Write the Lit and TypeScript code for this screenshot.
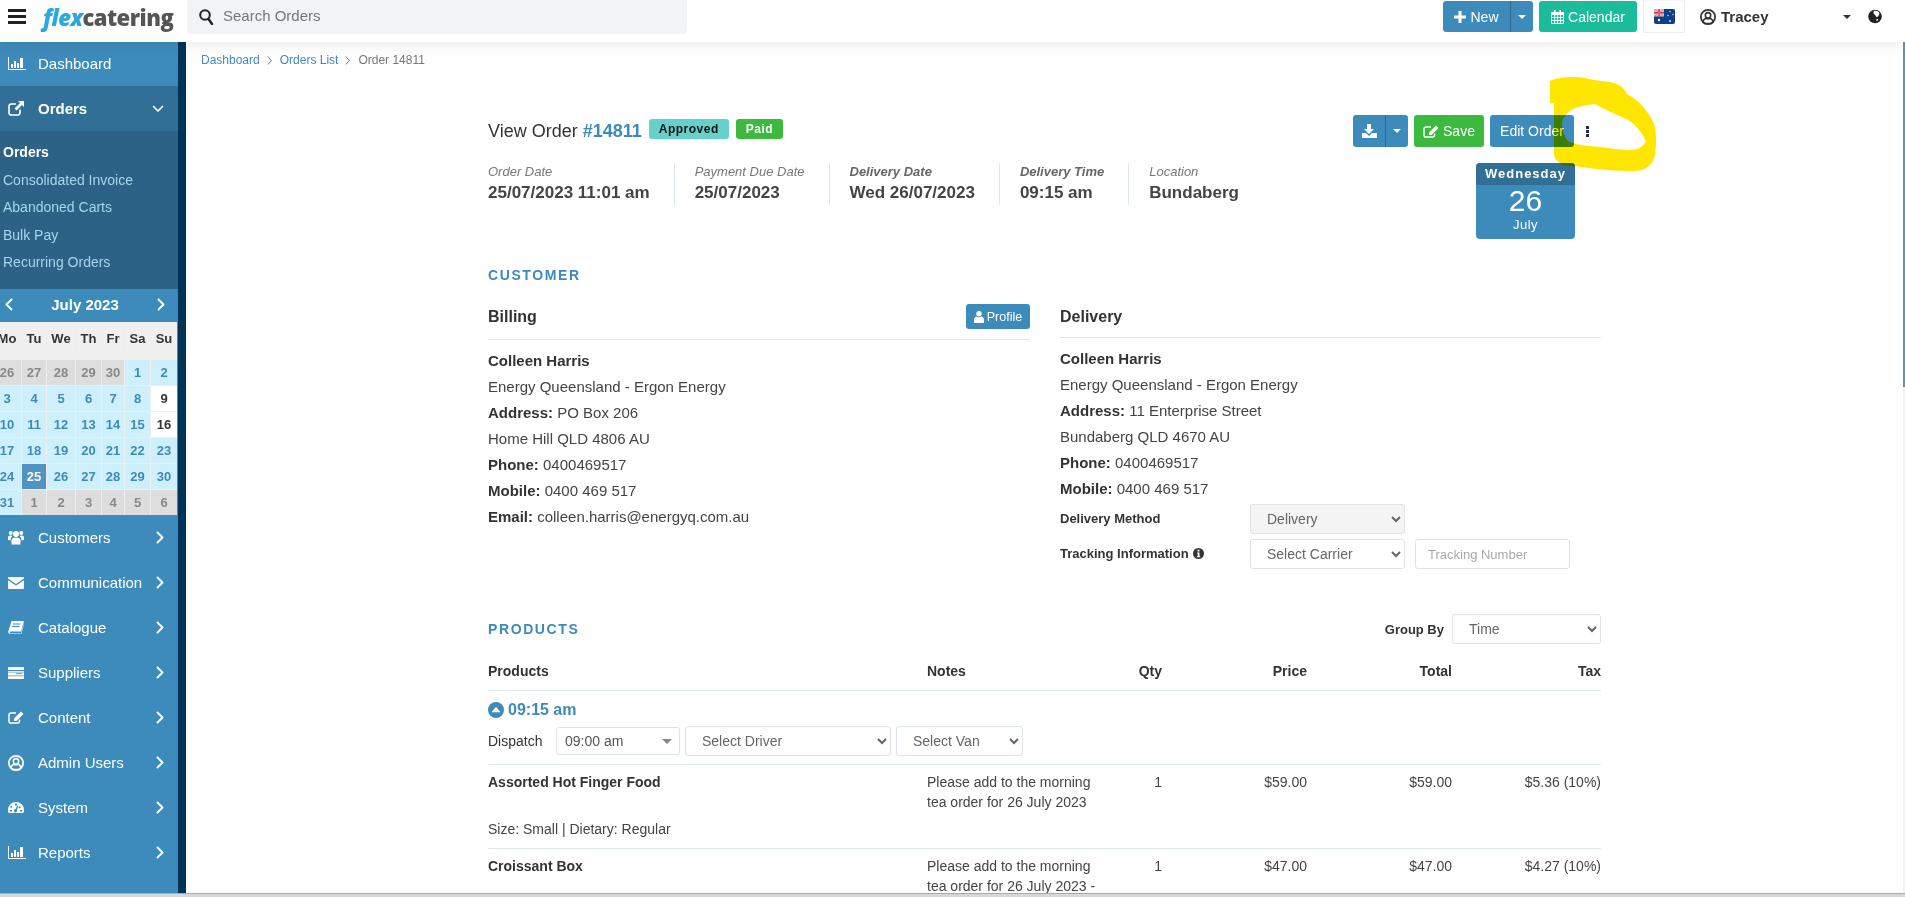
import { LitElement, html, svg, css, TemplateResult } from 'lit';
import { customElement } from 'lit/decorators.js';

// icons are all drawn with fill: currentColor unless they set their own stroke
const ico = (w: number, h: number, body: unknown, cls = '') =>
  html`<svg class="ic ${cls}" width=${w} height=${h} viewBox="0 0 ${w} ${h}">${body}</svg>`;

const line = (d: string, sw = 1.6) =>
  svg`<path d=${d} fill="none" stroke="currentColor" stroke-width=${sw} stroke-linecap="round" stroke-linejoin="round"/>`;

const ICONS: Record<string, TemplateResult> = {
  chart: ico(18, 13, svg`<path d="M0 0h1v12h17v1H0z"/><rect x="3" y="7" width="2" height="4"/><rect x="6" y="4" width="2" height="7"/><rect x="9" y="6" width="2" height="5"/><rect x="12" y="1" width="3" height="10"/>`),
  link: ico(16, 15, svg`<path d="M12 8.5v3.2A2.3 2.3 0 0 1 9.700 14H3.300A2.300 2.300 0 0 1 1 11.700V5.300A2.300 2.300 0 0 1 3.300 3H8" fill="none" stroke="currentColor" stroke-width="1.6"/><path d="M10 0h6v6l-2-2-5.500 5.500-2-2L12 2z"/>`),
  users: ico(16, 15, svg`<circle cx="8" cy="4" r="3"/><circle cx="2.800" cy="3" r="2"/><circle cx="13.200" cy="3" r="2"/><path d="M3.500 14.500V10.500C3.500 8.500 5 7.500 8 7.500s4.500 1 4.500 3v4z"/><path d="M0 10V7.500C0 6 1 5.500 3 5.500c.5 0 1 .5 1.200 1C3 7.200 2.500 8.500 2.500 10.500zM16 10V7.500C16 6 15 5.500 13 5.500c-.5 0-1 .5-1.200 1 1.200.7 1.700 2 1.700 4z"/>`),
  mail: ico(16, 12, svg`<path d="M1 0h14a1 1 0 0 1 1 1v.6L8 7 0 1.600V1a1 1 0 0 1 1-1z"/><path d="M0 3.200 8 8.600 16 3.200V11a1 1 0 0 1-1 1H1a1 1 0 0 1-1-1z"/>`),
  book: ico(16, 13, svg`<path fill-rule="evenodd" d="M3.500 0H16l-3 10.500H2.500c-.6 0-1 .6-.8 1 .2.300.5.500.8.500H13l3-10v1l-2.500 9.500H2C.5 13 0 11.500.3 10.200zM5 2.500l-.3 1h7.500l.3-1zM4.300 5l-.3 1h7.500l.3-1z"/>`),
  stack: ico(16, 12, svg`<rect width="16" height="3"/><rect y="4" width="16" height="1.200" opacity=".8"/><rect y="5.500" width="16" height="3"/><rect x="8" y="6.300" width="6" height=".8" fill="#3d8bbb"/><rect y="9.200" width="16" height="2.800"/>`),
  edit: ico(16, 13, svg`<path d="M11.500 8.500v1.700A1.800 1.800 0 0 1 9.700 12H2.800A1.800 1.800 0 0 1 1 10.200V3.800A1.800 1.800 0 0 1 2.800 2H8" fill="none" stroke="currentColor" stroke-width="1.500"/><path d="M13 .5l2.500 2.500L8.500 10H6V7.500z"/>`),
  person: ico(16, 16, svg`<circle cx="8" cy="8" r="7.100" fill="none" stroke="currentColor" stroke-width="1.800"/><circle cx="8" cy="6.300" r="2.700" fill="none" stroke="currentColor" stroke-width="1.600"/><path d="M3 13c.5-2.500 2-3.600 3-3.800.6.500 1.200.7 2 .7s1.400-.2 2-.7c1 .2 2.500 1.300 3 3.800l-1.500 1.500h-7z" fill="none" stroke="currentColor" stroke-width="1.500"/>`),
  gauge: ico(16, 11, svg`<path fill-rule="evenodd" d="M8 0a8 8 0 0 1 8 8c0 1-.2 2-.6 3H.6C.2 10 0 9 0 8a8 8 0 0 1 8-8zM7 1.500v2h2v-2zM3 3.500l-1 1.500 1.500 1 1-1.500zM11.500 4l-1 1.500L12 6.500l1-1.500zM2 8v1.500h2V8zM12 8v1.500h2V8zM9.500 3.500 7.300 7.200a1.600 1.600 0 1 0 1.600.8l1.500-4z"/>`),
  right: ico(8, 13, line('M1.500 1.500 6.500 6.500 1.500 11.500', 1.900)),
  left: ico(8, 13, line('M6.500 1.500 1.500 6.500 6.500 11.500', 1.900)),
  down: ico(12, 8, line('M1.500 1.500 6 6 10.500 1.500', 1.700)),
  sep: ico(6, 9, line('M1 .8 4.500 4.500 1 8.200', 1)),
  search: ico(15, 16, svg`<circle cx="6" cy="6" r="4.800" fill="none" stroke="currentColor" stroke-width="2"/><path d="M9.500 10 13 15" fill="none" stroke="currentColor" stroke-width="2.400" stroke-linecap="round"/>`),
  plus: ico(12, 12, svg`<path d="M4.500 0h3v4.500H12v3H7.500V12h-3V7.500H0v-3h4.500z"/>`),
  calendar: ico(13, 14, svg`<path fill-rule="evenodd" d="M1 2h2V0h1.500v2h4V0H10v2h2a1 1 0 0 1 1 1v10a1 1 0 0 1-1 1H1a1 1 0 0 1-1-1V3a1 1 0 0 1 1-1zM1 5v2h2.200V5zM4.200 5v2h2V5zM7.200 5v2h2V5zM10.200 5v2H12V5zM1 8v2h2.200V8zM4.200 8v2h2V8zM7.200 8v2h2V8zM10.200 8v2H12V8zM1 11v2h2.200v-2zM4.200 11v2h2v-2zM7.200 11v2h2v-2zM10.200 11v2H12v-2z"/>`),
  globe: ico(14, 15, svg`<circle cx="7" cy="7.500" r="6.800"/><path d="M6 2c2-.8 4 0 5 1.500.6 1 .4 2.400-.5 3.300-.8.700-1.200 1.500-1.800 1.200C7.500 7.500 7.700 6 6.500 5.500 5.500 5 5 3 6 2zM9 10c.8-.3 1.500 0 1 1-.4.700-1 1.200-1.500.8-.4-.5-.1-1.500.5-1.800z" fill="#fff"/>`),
  download: ico(15, 14, svg`<path d="M5 0h4v5h3L7 10 2 5h3z"/><path d="M0 9h4l3 3 3-3h5v5H0z"/>`),
  info: ico(11, 11, svg`<path fill-rule="evenodd" d="M5.500 0a5.500 5.500 0 1 1 0 11 5.500 5.500 0 0 1 0-11zM4.500 1.800v1.700h2V1.800zM4 4.500v1h.7v2.700H4v1h3.200v-1h-.7V4.500z"/>`),
  profile: ico(10, 12, svg`<circle cx="5" cy="2.800" r="2.700"/><path d="M0 12V8.500C0 7 1 6 2.500 5.500c.7.500 1.500.800 2.500.800s1.800-.300 2.500-.800C9 6 10 7 10 8.500V12z"/>`),
  up: ico(16, 16, svg`<circle cx="8" cy="8" r="8"/><path d="M8 4.800 12 9.500a.5.5 0 0 1-.4.800H4.400a.5.5 0 0 1-.4-.8z" fill="#fff"/>`),
  flag: ico(21, 15, svg`<rect width="21" height="15" rx="2" fill="#0b3f87"/><path d="M0 0h10v7.500H0z" fill="#c9c6d6"/><path d="M0 3h10v1.500H0zM4.300 0h1.500v7.500H4.300z" fill="#d9343f"/><path d="M0 0 10 7.500M10 0 0 7.500" stroke="#e7727c" stroke-width=".8"/><circle cx="5" cy="11" r="1.200" fill="#fff"/><circle cx="16" cy="2.500" r=".7" fill="#dfe8f5"/><circle cx="19" cy="5.500" r=".7" fill="#dfe8f5"/><circle cx="14" cy="6.500" r=".7" fill="#dfe8f5"/><circle cx="16" cy="12" r=".9" fill="#dfe8f5"/>`),
};

const MENU = [
  ['users', 'Customers'],
  ['mail', 'Communication'],
  ['book', 'Catalogue'],
  ['stack', 'Suppliers'],
  ['edit', 'Content'],
  ['person', 'Admin Users'],
  ['gauge', 'System'],
  ['chart', 'Reports'],
];

const SUBMENU = ['Consolidated Invoice', 'Abandoned Carts', 'Bulk Pay', 'Recurring Orders'];
const WEEKDAYS = ['Mo', 'Tu', 'We', 'Th', 'Fr', 'Sa', 'Su'];

// o = other month, n = this month, w = no delivery, t = today
const CALENDAR: [number, string][] = [
  [26, 'o'], [27, 'o'], [28, 'o'], [29, 'o'], [30, 'o'], [1, 'n'], [2, 'n'],
  [3, 'n'], [4, 'n'], [5, 'n'], [6, 'n'], [7, 'n'], [8, 'n'], [9, 'w'],
  [10, 'n'], [11, 'n'], [12, 'n'], [13, 'n'], [14, 'n'], [15, 'n'], [16, 'w'],
  [17, 'n'], [18, 'n'], [19, 'n'], [20, 'n'], [21, 'n'], [22, 'n'], [23, 'n'],
  [24, 'n'], [25, 't'], [26, 'n'], [27, 'n'], [28, 'n'], [29, 'n'], [30, 'n'],
  [31, 'n'], [1, 'o'], [2, 'o'], [3, 'o'], [4, 'o'], [5, 'o'], [6, 'o'],
];

const INFO = [
  ['Order Date', '25/07/2023 11:01 am', false],
  ['Payment Due Date', '25/07/2023', false],
  ['Delivery Date', 'Wed 26/07/2023', true],
  ['Delivery Time', '09:15 am', true],
  ['Location', 'Bundaberg', false],
] as const;

@customElement('app-root')
export class AppRoot extends LitElement {
  static styles = css`
    :host {
      display: block;
      font-family: 'Liberation Sans', Arial, sans-serif;
      font-size: 14px;
      color: #333;
    }
    * { box-sizing: border-box; }
    .ic { display: block; fill: currentColor; flex: none; }
    .page { position: relative; height: 897px; overflow: hidden; display: flex; flex-direction: column; background: #fff; }

    .top {
      height: 42px; flex: none; display: flex; align-items: flex-start; background: #fff;
      position: relative; z-index: 2; box-shadow: 0 4px 14px rgba(0, 0, 0, .07);
    }
    .burger { width: 18px; height: 15px; margin: 9px 0 0 8px; border-top: 3px solid #222; border-bottom: 3px solid #222; position: relative; }
    .burger::after { content: ''; position: absolute; left: 0; right: 0; top: 3px; height: 3px; background: #222; }
    .logo { margin-left: 17px; width: 144px; font: 800 22px/34px 'Open Sans', sans-serif; color: #555; letter-spacing: -.5px; }
    .logo i { color: #29a9e0; }
    .search { width: 500px; height: 34px; background: #f1f3f5; border-radius: 0 0 4px 4px; display: flex; align-items: center; padding-left: 12px; color: #222; }
    .search span { margin: -3px 0 0 9px; font-size: 15px; color: #777; }
    .top-right { margin-left: auto; display: flex; align-items: flex-start; padding-right: 23px; }
    .btn {
      height: 32px; display: flex; align-items: center; justify-content: center; gap: 4px;
      background: #3d8bbb; color: #fff; border-radius: 3px; font-size: 14px;
    }
    .btn.tall { height: 31px; margin-top: 1px; }
    .btn.split { width: 90px; padding: 0; overflow: hidden; gap: 0; }
    .split .main { flex: 1; height: 100%; display: flex; align-items: center; justify-content: center; gap: 4px; border-right: 1px solid #2a6a92; }
    .split .drop { width: 22px; display: flex; justify-content: center; }
    .caret { width: 0; height: 0; border: 4.500px solid transparent; border-top-color: currentColor; border-bottom: 0; }
    .cal-btn { width: 98px; margin-left: 6px; background: #1abc9c; }
    .flag-box { width: 42px; height: 33px; margin-left: 6px; border: 1px solid #eee; border-top-color: #f7f7f7; display: flex; justify-content: center; padding-top: 8px; }
    .user { width: 151px; margin: 8px 0 0 15px; display: flex; align-items: center; gap: 5px; font-size: 15px; font-weight: 700; color: #333; }
    .user .caret { margin-left: auto; border-width: 4px; border-bottom: 0; color: #333; }
    .globe { margin: 9px 0 0 17px; color: #222; }

    .body { flex: 1; display: flex; min-height: 0; }
    .side { width: 186px; flex: none; background: #3d8bbb; border-right: 8px solid #003358; overflow: hidden; color: #fff; font-size: 15px; }
    .nav { height: 45px; display: flex; align-items: center; position: relative; }
    .nav .glyph { width: 38px; padding-left: 8px; flex: none; }
    .nav .chev { position: absolute; left: 156px; top: 16px; }
    .nav.dash { height: 44px; padding-bottom: 1px; }
    .nav.open { background: #326f96; font-weight: 700; }
    .nav.open .chev { left: 152px; top: 19px; }
    .sub { height: 158px; background: #2b6285; padding-top: 8px; }
    .sub div { height: 27.500px; line-height: 27px; padding-left: 3px; font-size: 14px; color: #a5d5ee; }
    .sub .on { color: #fff; font-weight: 700; }
    .cal { background: #3d8bbb; overflow: hidden; }
    .cal-head { height: 33px; display: flex; align-items: center; justify-content: space-between; padding: 0 13px 2px 5px; font-weight: 700; }
    .days {
      display: grid; grid-template-columns: 28px 24px 28px 25px 22px 25px 26px; gap: 1px; margin-left: -7px; width: 184px;
      background: #eee; text-align: center; font-size: 13px; font-weight: 700;
    }
    .days > div { height: 25px; line-height: 26px; }
    .days .wd { height: 37px; line-height: 34px; background: #f0f0f0; color: #333; }
    .d-o { background: #ddd; color: #888; }
    .d-n { background: #cdf0fc; color: #3d8bbb; }
    .d-w { background: #fff; color: #333; }
    .d-t { background: #4f93c0; color: #fff; }

    .main { flex: 1; min-width: 0; overflow: hidden; }
    .crumbs { display: flex; align-items: center; gap: 7px; padding: 10px 0 0 15px; height: 27px; font-size: 12px; line-height: 17px; color: #777; }
    .crumbs a { color: #3d8bbb; }
    .sheet { width: 1113px; margin: 46px 0 0 302px; }

    .order { display: flex; justify-content: space-between; }
    .title { height: 32px; display: flex; align-items: center; gap: 7px; font-size: 18px; }
    .title b { color: #3d8bbb; }
    .badge { height: 20px; margin-top: -4px; padding: 0 10px; border-radius: 3px; font-size: 12px; font-weight: 700; line-height: 20px; letter-spacing: .5px; background: #66d0cb; color: #111; }
    .badge.paid { background: #3cb93f; color: #fff; }
    .info { display: flex; margin-top: 16px; }
    .info > div { height: 42px; padding: 0 24px 0 20px; border-right: 1px solid #dde6ea; }
    .info > div:first-child { padding-left: 0; }
    .info > div:last-child { border: 0; }
    .info small { display: block; font-size: 13px; line-height: 18px; font-style: italic; color: #777; }
    .info small.strong { font-weight: 700; color: #666; }
    .info strong { display: block; font-size: 17px; line-height: 24px; color: #444; }
    .actions-col { width: 248px; }
    .actions { display: flex; align-items: center; gap: 6px; }
    .btn.dl { width: 55px; }
    .save { width: 70px; background: #3cb93f; }
    .edit-order { width: 84px; }
    .kebab { margin-left: 6px; display: flex; flex-direction: column; gap: 1px; }
    .kebab i { width: 3px; height: 3px; background: #1f2a55; }
    .date { width: 99px; height: 76px; margin: 16px 0 0 123px; border-radius: 4px; overflow: hidden; background: #3d8bbb; color: #fff; text-align: center; }
    .date b { display: block; height: 22px; line-height: 21px; background: #326f94; font-size: 13px; letter-spacing: 1px; }
    .date span { display: block; font-size: 30px; line-height: 32px; }
    .date em { display: block; font-style: normal; font-size: 13px; letter-spacing: .5px; line-height: 16px; }

    h3 { margin: 0; font-size: 14px; line-height: 20px; font-weight: 700; letter-spacing: 1.600px; color: #3d8bbb; }
    .customer { margin-top: 26px; }
    .cols { display: grid; grid-template-columns: 542px 541px; gap: 30px; margin-top: 19px; }
    .col-head { display: flex; justify-content: space-between; align-items: flex-start; height: 36px; border-bottom: 1px solid #dde6ea; font-size: 16px; font-weight: 700; line-height: 26px; }
    .col-head.short { height: 34px; }
    .profile { width: 64px; height: 25px; font-size: 12.500px; font-weight: 400; gap: 3px; }
    .addr { margin-top: 8px; font-size: 15px; line-height: 26px; color: #444; }
    .addr b { color: #333; }
    .form { display: grid; grid-template-columns: 190px 155px 155px; column-gap: 0; row-gap: 5px; margin-top: 2px; align-items: center; font-size: 13px; font-weight: 700; }
    .form .label { display: flex; align-items: center; gap: 4px; padding-bottom: 2px; }
    select, input {
      height: 30px; border: 1px solid #dde3e8; border-radius: 3px; background: #fff; padding: 0 6px 0 12px;
      font: 14px 'Liberation Sans', Arial, sans-serif; color: #666; width: 100%;
    }
    select.off { background: #f4f4f4; }
    input { width: 155px; margin-left: 10px; font-size: 13px; }
    input::placeholder { color: #aaa; }

    .products-head { display: flex; align-items: center; justify-content: space-between; margin-top: 45px; height: 30px; }
    .group { display: flex; align-items: center; gap: 8px; font-size: 13px; font-weight: 700; }
    .group select { width: 149px; }
    .row { display: grid; grid-template-columns: 439px 170px 65px 145px 145px 149px; line-height: 20px; color: #444; }
    .row > .r { text-align: right; }
    .row.heads { padding: 17px 0 9px; border-bottom: 1px solid #dde6ea; font-weight: 700; color: #333; }
    .slot { padding-top: 9px; border-bottom: 1px solid #dde6ea; padding-bottom: 8px; }
    .slot-time { display: flex; align-items: center; gap: 4px; height: 20px; color: #3d8bbb; font-size: 16px; font-weight: 700; }
    .dispatch { display: flex; align-items: center; margin-top: 6px; height: 30px; }
    .dispatch span.lbl { width: 68px; }
    .dispatch .time { width: 124px; height: 28px; border: 1px solid #dde3e8; border-radius: 3px; display: flex; align-items: center; justify-content: space-between; padding: 0 7px 0 8px; color: #555; }
    .dispatch .time .caret { color: #888; border-width: 5px; border-bottom: 0; }
    .dispatch select { margin-left: 5px; }
    .driver { width: 206px; }
    .van { width: 127px; }
    .item { padding: 7px 0 9px; border-bottom: 1px solid #dde6ea; }
    .item .row b { color: #333; }
    .opts { margin-top: 7px; line-height: 20px; color: #444; }

    .scroll { width: 2px; flex: none; background: #f3f3f3; }
    .scroll div { height: 345px; background: #4f97c7; }
    .band { height: 4px; flex: none; background: #d6d6dd; border-top: 1px solid #aaa; }
    .marker { position: absolute; left: 0; top: 0; mix-blend-mode: multiply; pointer-events: none; z-index: 3; }
  `;

  private renderSide() {
    return html`<aside class="side">
      <div class="nav dash"><span class="glyph">${ICONS.chart}</span>Dashboard</div>
      <div class="nav open"><span class="glyph">${ICONS.link}</span>Orders<span class="chev">${ICONS.down}</span></div>
      <div class="sub">
        <div class="on">Orders</div>
        ${SUBMENU.map((s) => html`<div>${s}</div>`)}
      </div>
      <div class="cal">
        <div class="cal-head">${ICONS.left}<span>July 2023</span>${ICONS.right}</div>
        <div class="days">
          ${WEEKDAYS.map((d) => html`<div class="wd">${d}</div>`)}
          ${CALENDAR.map(([n, k]) => html`<div class="d-${k}">${n}</div>`)}
        </div>
      </div>
      ${MENU.map(
        ([icon, label]) => html`<div class="nav">
          <span class="glyph">${ICONS[icon]}</span>${label}<span class="chev">${ICONS.right}</span>
        </div>`,
      )}
    </aside>`;
  }

  private renderOrder() {
    return html`<div class="order">
      <div>
        <div class="title">
          <span>View Order <b>#14811</b></span>
          <span class="badge">Approved</span>
          <span class="badge paid">Paid</span>
        </div>
        <div class="info">
          ${INFO.map(
            ([k, v, strong]) => html`<div>
              <small class=${strong ? 'strong' : ''}>${k}</small>
              <strong>${v}</strong>
            </div>`,
          )}
        </div>
      </div>
      <div class="actions-col">
        <div class="actions">
          <div class="btn split dl"><span class="main">${ICONS.download}</span><span class="drop"><span class="caret"></span></span></div>
          <div class="btn save">${ICONS.edit}Save</div>
          <div class="btn edit-order">Edit Order</div>
          <div class="kebab"><i></i><i></i><i></i></div>
        </div>
        <div class="date"><b>Wednesday</b><span>26</span><em>July</em></div>
      </div>
    </div>`;
  }

  private renderCustomer() {
    return html`<h3 class="customer">CUSTOMER</h3>
      <div class="cols">
        <div>
          <div class="col-head">Billing<div class="btn profile">${ICONS.profile}Profile</div></div>
          <div class="addr">
            <div><b>Colleen Harris</b></div>
            <div>Energy Queensland - Ergon Energy</div>
            <div><b>Address:</b> PO Box 206</div>
            <div>Home Hill QLD 4806 AU</div>
            <div><b>Phone:</b> 0400469517</div>
            <div><b>Mobile:</b> 0400 469 517</div>
            <div><b>Email:</b> colleen.harris@energyq.com.au</div>
          </div>
        </div>
        <div>
          <div class="col-head short">Delivery</div>
          <div class="addr">
            <div><b>Colleen Harris</b></div>
            <div>Energy Queensland - Ergon Energy</div>
            <div><b>Address:</b> 11 Enterprise Street</div>
            <div>Bundaberg QLD 4670 AU</div>
            <div><b>Phone:</b> 0400469517</div>
            <div><b>Mobile:</b> 0400 469 517</div>
          </div>
          <div class="form">
            <div class="label">Delivery Method</div>
            <select class="off"><option>Delivery</option></select>
            <div></div>
            <div class="label">Tracking Information ${ICONS.info}</div>
            <select><option>Select Carrier</option></select>
            <input placeholder="Tracking Number" />
          </div>
        </div>
      </div>`;
  }

  private renderProducts() {
    return html`<div class="products-head">
        <h3>PRODUCTS</h3>
        <div class="group">Group By <select><option>Time</option></select></div>
      </div>
      <div class="row heads">
        <div>Products</div><div>Notes</div><div class="r">Qty</div>
        <div class="r">Price</div><div class="r">Total</div><div class="r">Tax</div>
      </div>
      <div class="slot">
        <div class="slot-time">${ICONS.up}09:15 am</div>
        <div class="dispatch">
          <span class="lbl">Dispatch</span>
          <div class="time">09:00 am<span class="caret"></span></div>
          <select class="driver"><option>Select Driver</option></select>
          <select class="van"><option>Select Van</option></select>
        </div>
      </div>
      <div class="item">
        <div class="row">
          <div><b>Assorted Hot Finger Food</b></div>
          <div>Please add to the morning tea order for 26 July 2023</div>
          <div class="r">1</div><div class="r">$59.00</div><div class="r">$59.00</div><div class="r">$5.36 (10%)</div>
        </div>
        <div class="opts">Size: Small | Dietary: Regular</div>
      </div>
      <div class="item">
        <div class="row">
          <div><b>Croissant Box</b></div>
          <div>Please add to the morning tea order for 26 July 2023 -</div>
          <div class="r">1</div><div class="r">$47.00</div><div class="r">$47.00</div><div class="r">$4.27 (10%)</div>
        </div>
      </div>`;
  }

  render() {
    return html`<div class="page">
      <header class="top">
        <div class="burger"></div>
        <div class="logo"><i>flex</i>catering</div>
        <div class="search">${ICONS.search}<span>Search Orders</span></div>
        <div class="top-right">
          <div class="btn tall split"><span class="main">${ICONS.plus}New</span><span class="drop"><span class="caret"></span></span></div>
          <div class="btn tall cal-btn">${ICONS.calendar}Calendar</div>
          <div class="flag-box">${ICONS.flag}</div>
          <div class="user">${ICONS.person}Tracey<span class="caret"></span></div>
          <div class="globe">${ICONS.globe}</div>
        </div>
      </header>
      <div class="body">
        ${this.renderSide()}
        <main class="main">
          <nav class="crumbs"><a>Dashboard</a>${ICONS.sep}<a>Orders List</a>${ICONS.sep}<span>Order 14811</span></nav>
          <div class="sheet">
            ${this.renderOrder()}
            ${this.renderCustomer()}
            ${this.renderProducts()}
          </div>
        </main>
        <div class="scroll"><div></div></div>
      </div>
      <div class="band"></div>
      <svg class="marker" width="1905" height="897" viewBox="0 0 1905 897">
        <path fill="#ffe600" fill-rule="evenodd" d="M1550 81C1558 77 1575 76 1585 78C1595 81 1610 81 1617 84C1623 87 1625 90 1627 94C1637 99 1645 108 1650 116C1655 124 1656 130 1656 140C1656 152 1655 160 1650 165C1645 170 1640 171 1630 171C1610 171 1590 168 1565 165C1558 163 1554 159 1554 153L1554 103L1550 103ZM1595 104C1585 105 1575 107 1570 111C1565 115 1562 119 1562 124C1562 130 1564 137 1568 141C1572 144 1585 146 1600 147C1610 148 1622 150 1630 150C1638 150 1643 147 1646 141C1640 130 1636 125 1628 120C1618 115 1605 110 1595 104Z"/>
      </svg>
    </div>`;
  }
}
